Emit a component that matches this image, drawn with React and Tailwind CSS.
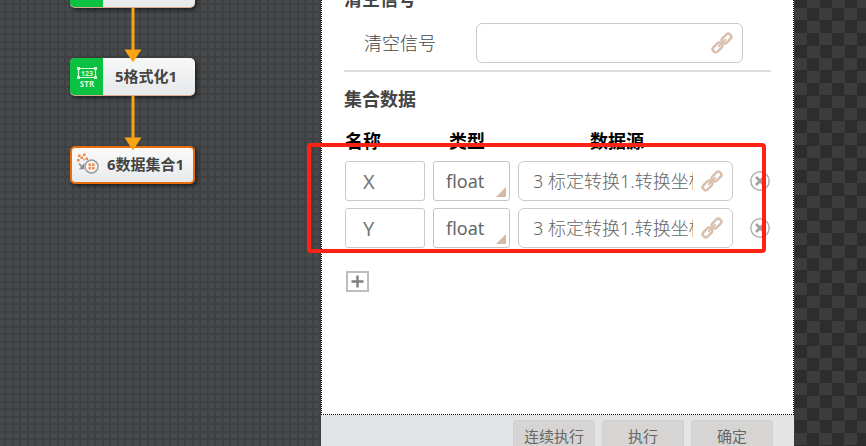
import {useState} from "react";

const TYPES = ["float", "int", "string"];

function LinkIcon() {
    return (
        <svg width="22" height="22" viewBox="0 0 22 22" fill="none" stroke="#d9bfae" strokeWidth="2.5" strokeLinecap="round" aria-hidden="true">
            <g transform="rotate(-45 11 11)">
                <path d="M9.800 9.300A2.800 2.800 0 0 0 7.400 8H2a2.800 2.800 0 0 0-2.800 2.800v.4A2.800 2.800 0 0 0 2 14h5.400a2.800 2.800 0 0 0 2.400-1.300" />
                <path d="M12.200 9.300A2.800 2.800 0 0 1 14.600 8H20a2.800 2.800 0 0 1 2.800 2.800v.4A2.800 2.800 0 0 1 20 14h-5.400a2.800 2.800 0 0 1-2.400-1.300" />
                <path d="M6.500 11h9" strokeWidth="2" />
            </g>
        </svg>
    );
}

function FormatIcon() {
    return (
        <svg width="22" height="22" viewBox="0 0 22 22" fill="none" stroke="#d8f5df" aria-hidden="true">
            <path d="M2.500 2.500h17v9h-17z" strokeWidth="1.200" />
            <path d="M1 1h3v3H1zM18 1h3v3h-3zM1 10h3v3H1zM18 10h3v3h-3z" fill="#d8f5df" stroke="none" />
            <text x="11" y="9.500" textAnchor="middle" fontSize="7" fontWeight="700" fill="#d8f5df" stroke="none">123</text>
            <text x="11" y="20.500" textAnchor="middle" fontSize="8" fontWeight="700" fill="#d8f5df" stroke="none">STR</text>
        </svg>
    );
}

function CollectIcon() {
    return (
        <svg width="22" height="22" viewBox="0 0 22 22" aria-hidden="true">
            <path
                d="M1 1.500h2.500V4H1zM6 .5h2.500V3H6zM3.500 3.500H6V6H3.500zM0 6h2.500v2.500H0zM6 6h1.500v1.500H6zM8.500 4.500H11V7H8.500z"
                fill="#f08a4b"
            />
            <path d="M2 10.500l3.500 4M6.500 12v3.500H3.500z" stroke="#8b8f92" strokeWidth="1.500" fill="#8b8f92" />
            <circle cx="14.500" cy="13.500" r="6.500" fill="#f4f4f4" stroke="#9b9fa2" strokeWidth="1.500" />
            <path d="M11.500 10.500H14V13h-2.500zM15 10.500h2.500V13H15zM11.500 14H14v2.500h-2.500zM15 14h2.500v2.500H15z" fill="#f08a4b" />
        </svg>
    );
}

function Arrow() {
    return (
        <svg width="18" height="54" viewBox="0 0 18 54" className="relative z-10 -mb-1 mx-auto block" fill="#fba412" aria-hidden="true">
            <path d="M7.500 0h3v42h-3z" />
            <path d="M.5 41.500h17L9 54.500z" />
        </svg>
    );
}

function GreenNode({icon, label}) {
    return (
        <div className="flex h-[38px] overflow-hidden rounded-[5px] border-b border-[#d8a98c] bg-linear-to-b from-[#f8f8f7] to-[#e6e8ea] shadow-[2px_2px_4px_rgba(0,0,0,0.6)]">
            <div className="flex w-[33px] items-center justify-center bg-[#0cc142]">{icon}</div>
            <div className="flex flex-1 items-center justify-center pr-1.5 text-[15px] font-bold text-[#444]">{label}</div>
        </div>
    );
}

function SourceField({id, label, value}) {
    return (
        <div className="flex h-10 w-full items-center justify-between rounded-[6px] border border-[#cacaca] bg-white pl-3.5 pr-[9px]">
            <input
                id={id}
                aria-label={label}
                defaultValue={value}
                className="w-40 min-w-0 bg-transparent text-[18px] font-light text-[#666] outline-none"
            />
            <button type="button" aria-label="链接"><LinkIcon /></button>
        </div>
    );
}

export default function App() {
    const [rows, setRows] = useState([
        {id: 1, name: "X", type: "float", source: "3 标定转换1.转换坐标X"},
        {id: 2, name: "Y", type: "float", source: "3 标定转换1.转换坐标Y"},
    ]);

    function addRow() {
        setRows([...rows, {id: Date.now(), name: "", type: "float", source: ""}]);
    }

    function removeRow(id) {
        setRows(rows.filter(row => row.id !== id));
    }

    return (
        <div className="flex h-screen overflow-hidden bg-[#454648] font-['Noto_Sans','Noto_Sans_CJK_SC',sans-serif]">
            <section className="w-[321px] shrink-0 bg-[#48494b] bg-[linear-gradient(to_right,#3f4042_2px,transparent_2px_8px,#3f4042_8px_10px,transparent_10px),linear-gradient(to_bottom,#3f4042_2px,transparent_2px_8px,#3f4042_8px_10px,transparent_10px)] bg-size-[15px_15px] bg-position-[4px_3px]">
                <div className="-mt-[30px] ml-[70px] w-[125px]">
                    <GreenNode />
                    <Arrow />
                    <GreenNode icon={<FormatIcon />} label="5格式化1" />
                    <Arrow />
                    <div className="flex h-[38px] items-center gap-2 rounded-[5px] border-2 border-[#e96d0c] bg-linear-to-b from-[#fafafa] to-[#e8eaec] pb-0.5 pl-[5px] text-[15px] font-bold text-[#444] shadow-[2px_2px_4px_rgba(0,0,0,0.6)]">
                        <CollectIcon />
                        6数据集合1
                    </div>
                </div>
            </section>

            <main className="flex min-w-0 flex-1 flex-col">
                <div className="flex-1 border border-t-0 border-dotted border-black bg-white px-[22px]">
                    <h2 className="-mt-[13px] text-[18px]/6 font-bold text-[#444]">清空信号</h2>
                    <div className="mt-3 flex items-center pr-7">
                        <label htmlFor="clear" className="w-[132px] shrink-0 pl-5 text-[18px] font-light text-[#444]">清空信号</label>
                        <SourceField id="clear" value="" />
                    </div>
                    <hr className="mt-[7px] border-t-2 border-[#dedede]" />
                    <h2 className="mt-[15px] text-[18px]/6 font-bold text-[#444]">集合数据</h2>

                    <div className="relative mt-[18px]">
                        <table className="ml-px w-[426px] table-fixed">
                            <thead>
                                <tr className="h-[25px] text-left align-top text-[18px]/6 text-black">
                                    <th className="w-[88px] p-0">名称</th>
                                    <th className="w-[85px] p-0 pl-4">类型</th>
                                    <th className="p-0 pl-[72px]">数据源</th>
                                    <td className="w-[21px] p-0"></td>
                                </tr>
                            </thead>
                            <tbody>
                                {rows.map(row => (
                                    <tr key={row.id}>
                                        <td className="p-0 pr-2 pt-[7px]">
                                            <input
                                                aria-label="名称"
                                                defaultValue={row.name}
                                                className="block h-10 w-full rounded-[3px] border border-[#cacaca] pl-[17px] text-[20px] text-[#777] outline-none"
                                            />
                                        </td>
                                        <td className="p-0 pr-2 pt-[7px]">
                                            <div className="relative">
                                                <select
                                                    aria-label="类型"
                                                    defaultValue={row.type}
                                                    className="block h-10 w-full appearance-none rounded-[3px] border border-[#c9c3c3] bg-white pl-3 text-[18px] text-[#666] outline-none"
                                                >
                                                    {TYPES.map(type => <option key={type}>{type}</option>)}
                                                </select>
                                                <svg width="10" height="10" viewBox="0 0 10 10" className="pointer-events-none absolute bottom-1 right-1" aria-hidden="true">
                                                    <path d="M10 0v10H0z" fill="#d5b8a6" />
                                                </svg>
                                            </div>
                                        </td>
                                        <td className="p-0 pr-[17px] pt-[7px]">
                                            <SourceField label="数据源" value={row.source} />
                                        </td>
                                        <td className="p-0 pt-[7px]">
                                            <button type="button" aria-label="删除" className="block" onClick={() => removeRow(row.id)}>
                                                <svg width="20" height="20" viewBox="0 0 20 20" fill="none" stroke="#b0b0b0" aria-hidden="true">
                                                    <circle cx="10" cy="10" r="9.200" strokeWidth="1.500" />
                                                    <path d="M6 6l8 8M14 6l-8 8" stroke="#a0a0a0" strokeWidth="2.600" />
                                                </svg>
                                            </button>
                                        </td>
                                    </tr>
                                ))}
                            </tbody>
                        </table>
                        <div className="pointer-events-none absolute -bottom-[5px] -left-[37px] right-[5px] top-3.5 rounded-[4px] border-4 border-[#ff2214]"></div>
                    </div>

                    <button type="button" aria-label="添加" onClick={addRow} className="ml-0.5 mt-[23px] flex h-[21px] w-[23px] items-center justify-center border-2 border-[#bdbdbd]">
                        <svg width="13" height="13" viewBox="0 0 13 13" stroke="#808080" strokeWidth="2.400" aria-hidden="true">
                            <path d="M6.500 .5v12M.5 6.500h12" />
                        </svg>
                    </button>
                </div>

                <footer className="flex h-[31px] shrink-0 items-start justify-end gap-[7px] bg-[#e3e4e6] pr-[21px] pt-[5px]">
                    {["连续执行", "执行", "确定"].map(label => (
                        <button
                            key={label}
                            type="button"
                            className="h-8 w-[82px] shrink-0 rounded-[3px] border border-[#cfd0d0] bg-[#d6d5d3] text-[15px] text-[#666]"
                        >
                            {label}
                        </button>
                    ))}
                </footer>
            </main>

            <aside className="w-[72px] shrink-0 bg-[repeating-conic-gradient(#3c3c3c_0_25%,#2d2d2d_0_50%)] bg-size-[25px_25px] bg-position-[13px_8px]"></aside>
        </div>
    );
}
